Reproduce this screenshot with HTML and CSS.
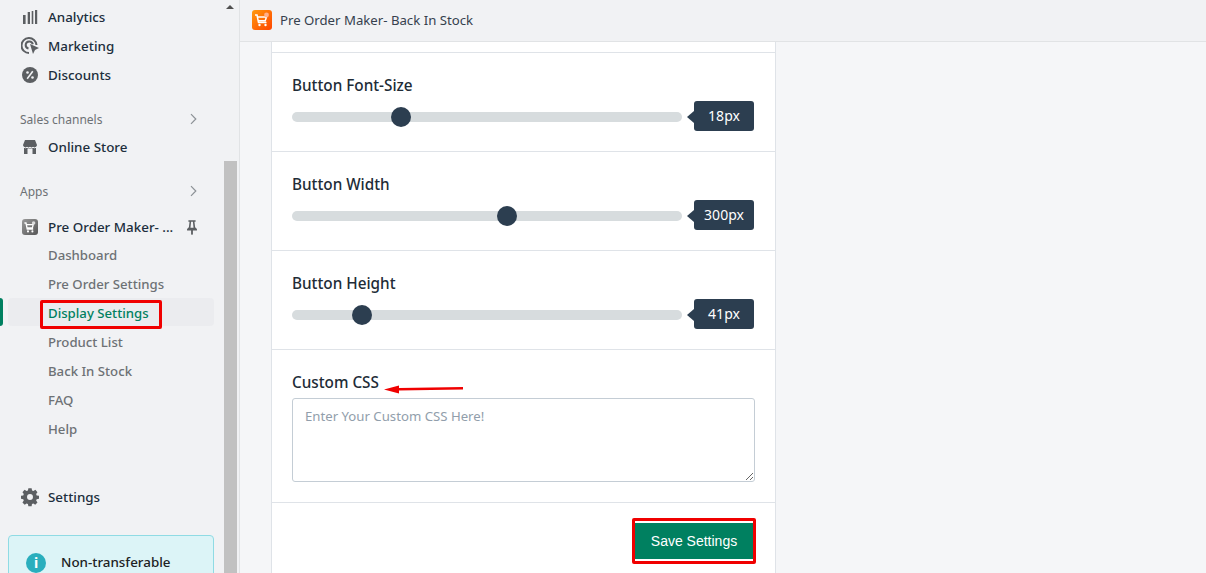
FILE: index.html
```html
<!DOCTYPE html>
<html lang="en">
<head>
  <meta charset="UTF-8">
  <title>Pre Order Maker - Display Settings</title>
  <link rel="stylesheet" href="styles.css">
</head>
<body>
  <div class="layout">
    <aside class="sidebar">
      <nav class="nav">
        <a class="nav-item">
          <svg class="nav-icon" viewBox="0 0 20 20"><path d="M2 8h2.600v9H2zM6.700 5H9v12H6.700zM10.700 4H12.300v13H10.700zM14 3h2.200v14H14z" fill="#5c5f62"/></svg>
          Analytics
        </a>
        <a class="nav-item">
          <svg class="nav-icon" viewBox="0 0 20 20"><path d="M8 17A7.500 7.500 0 1 1 15.500 9M7.500 12.500A3.600 3.600 0 1 1 11.800 8.200" fill="none" stroke="#5c5f62" stroke-width="2"/><path d="M9 8l9 4-4 2-2 4z" fill="#5c5f62"/></svg>
          Marketing
        </a>
        <a class="nav-item">
          <svg class="nav-icon" viewBox="0 0 20 20"><circle cx="9" cy="10" r="8" fill="#5c5f62"/><path d="M11.800 6.200l-5.600 7.600" stroke="#f1f2f4" stroke-width="1.600"/><circle cx="6.500" cy="7.500" r="1.300" fill="#f1f2f4"/><circle cx="11.500" cy="12.500" r="1.300" fill="#f1f2f4"/></svg>
          Discounts
        </a>

        <div class="nav-heading heading-sales">
          Sales channels
          <svg class="chevron" viewBox="0 0 20 20"><path d="M7.500 4l6 6-6 6" fill="none" stroke="#8c9196" stroke-width="1.500"/></svg>
        </div>
        <a class="nav-item">
          <svg class="nav-icon" viewBox="0 0 20 20"><path d="M4 3h10l2 5a2.500 2.500 0 0 1-1 1.800V17h-3.500v-5.500h-5V17H3V9.800A2.500 2.500 0 0 1 2 8z" fill="#5c5f62"/><path d="M3 10.300q1.500 1 3 0 1.500 1 3 0 1.500 1 3 0 1.500 1 3 0" fill="none" stroke="#f1f2f4" stroke-width="1"/></svg>
          Online Store
        </a>

        <div class="nav-heading heading-apps">
          Apps
          <svg class="chevron" viewBox="0 0 20 20"><path d="M7.500 4l6 6-6 6" fill="none" stroke="#8c9196" stroke-width="1.500"/></svg>
        </div>
        <a class="nav-item app-item">
          <span class="app-icon">
            <svg viewBox="0 0 20 20"><path d="M3 5h2l1.500 7.500h7.500M6 7h8l-1 4H6.500" fill="none" stroke="#fff" stroke-width="1.600"/><circle cx="7.500" cy="15.500" r="1.300" fill="#fff"/><circle cx="13" cy="15.500" r="1.300" fill="#fff"/><circle cx="14.500" cy="5" r="2.200" fill="#ddd"/></svg>
          </span>
          <span class="app-name">Pre Order Maker- ...</span>
          <svg class="pin" viewBox="0 0 20 20"><path d="M6 2.500h8v1.800h-1.300l.8 6 2 2v1.700h-4.500v4l-1 1-1-1v-4H4.500v-1.700l2-2 .8-6H6zM9 4.300l-.7 6.500h3.400L11 4.300z" fill="#5c5f62"/></svg>
        </a>
        <a class="nav-sub">Dashboard</a>
        <a class="nav-sub">Pre Order Settings</a>
        <a class="nav-sub active">Display Settings<span class="mark-box"></span></a>
        <a class="nav-sub">Product List</a>
        <a class="nav-sub">Back In Stock</a>
        <a class="nav-sub">FAQ</a>
        <a class="nav-sub">Help</a>

        <a class="nav-item settings-item">
          <svg class="nav-icon" viewBox="0 0 20 20"><path fill-rule="evenodd" d="M8.200 1h3.600l.5 2.500 1.500.7 2.200-1.400 2.300 2.600-1.500 2 .6 1.600 2.600.5v3.300l-2.600.5-.6 1.500 1.500 2.200-2.500 2.500-2.100-1.500-1.500.6-.4 2.500H8.200l-.5-2.500-1.500-.6-2.100 1.500-2.500-2.500 1.500-2.200-.6-1.500L0 12.800V9.500l2.500-.5.600-1.600-1.500-2L4 2.800l2.200 1.400 1.500-.7zM10 7.500a3.300 3.300 0 1 0 0 6.600 3.300 3.300 0 0 0 0-6.600z" transform="translate(0 .3) scale(.9)" fill="#5c5f62"/></svg>
          Settings
        </a>
        <div class="notice">
          <span class="notice-icon">i</span>
          Non-transferable
        </div>
      </nav>
      <div class="scrollbar">
        <span class="scroll-arrow"></span>
        <div class="scroll-thumb"></div>
      </div>
    </aside>

    <div class="content">
      <header class="topbar">
        <span class="app-logo">
          <svg viewBox="0 0 20 20"><path d="M3 5h2l1.500 7.500h8M6 7h8.500l-1.300 3.800H6.500" fill="none" stroke="#fff" stroke-width="1.500"/><circle cx="7.500" cy="15" r="1.200" fill="#fff"/><circle cx="13.500" cy="15" r="1.200" fill="#fff"/><circle cx="14.500" cy="5" r="2.400" fill="#ffb08a"/></svg>
        </span>
        Pre Order Maker- Back In Stock
      </header>
      <main class="main">
        <section class="card">
          <div class="card-row row-top"></div>

          <div class="card-row slider-row">
            <label class="field-label">Button Font-Size</label>
            <div class="slider">
              <div class="track"><span class="thumb" style="left: 27.9%"></span></div>
              <span class="bubble">18px</span>
            </div>
          </div>

          <div class="card-row slider-row">
            <label class="field-label">Button Width</label>
            <div class="slider">
              <div class="track"><span class="thumb" style="left: 55.1%"></span></div>
              <span class="bubble">300px</span>
            </div>
          </div>

          <div class="card-row slider-row">
            <label class="field-label">Button Height</label>
            <div class="slider">
              <div class="track"><span class="thumb" style="left: 17.9%"></span></div>
              <span class="bubble">41px</span>
            </div>
          </div>

          <div class="card-row css-row">
            <label class="field-label css-label">Custom CSS
              <svg class="arrow-mark" viewBox="0 0 80 9"><path d="M0 4.500L15 0.500v2.500L79 2V4.500L15 5.500v3z" fill="#f00000"/></svg>
            </label>
            <textarea class="css-input" placeholder="Enter Your Custom CSS Here!"></textarea>
          </div>

          <div class="card-row actions">
            <button class="save-btn">Save Settings</button>
          </div>
        </section>
      </main>
    </div>
  </div>
</body>
</html>
```

FILE: styles.css
```css
* {
  box-sizing: border-box;
}
html, body {
  height: 100%;
}
body {
  margin: 0;
  overflow: hidden;
  font-family: 'Noto Sans', 'Open Sans', sans-serif;
  font-size: 14px;
  color: #202223;
  background: #f5f6f8;
}
.layout {
  display: flex;
  height: 100vh;
}

/* sidebar */
.sidebar {
  width: 240px;
  flex-shrink: 0;
  display: flex;
  background: #f1f2f4;
  border-right: 1px solid #e1e3e5;
  overflow: hidden;
}
.nav {
  width: 224px;
  flex-shrink: 0;
  padding: 2px 10px 0 8px;
}
.nav-item {
  display: flex;
  align-items: center;
  gap: 7px;
  height: 29px;
  padding-left: 13px;
  font-size: 13.4px;
  font-weight: 500;
  color: #202e3c;
}
.nav-icon {
  width: 20px;
  height: 20px;
  flex-shrink: 0;
}
.nav-heading {
  display: flex;
  align-items: center;
  justify-content: space-between;
  height: 20px;
  padding: 0 13px 0 12px;
  font-size: 12px;
  color: #6d7175;
}
.heading-sales {
  margin-top: 20px;
  margin-bottom: 3px;
}
.heading-apps {
  margin-top: 20px;
  margin-bottom: 11px;
}
.chevron {
  width: 16px;
  height: 16px;
}
.app-item {
  height: 28px;
  padding-top: 1px;
}
.app-icon {
  width: 16px;
  height: 16px;
  margin: 0 3px 0 1px;
  border-radius: 3px;
  background: linear-gradient(135deg, #9a9a9a, #555);
  flex-shrink: 0;
}
.app-icon svg, .app-logo svg {
  display: block;
  width: 100%;
  height: 100%;
}
.app-name {
  flex: 1;
  white-space: nowrap;
}
.pin {
  width: 18px;
  height: 18px;
  margin-right: 13px;
}
.nav-sub {
  position: relative;
  display: flex;
  align-items: center;
  height: 29px;
  padding-left: 40px;
  font-size: 13.2px;
  font-weight: 500;
  color: #6d7175;
}
.nav-sub.active {
  background: #ebecef;
  border-radius: 4px;
  font-weight: 500;
  color: #008060;
  height: 28px;
  padding-top: 1px;
  margin-bottom: 1px;
}
.nav-sub.active::before {
  content: "";
  position: absolute;
  left: -8px;
  top: 0;
  width: 3px;
  height: 100%;
  background: #008060;
  border-radius: 0 3px 3px 0;
}
.mark-box {
  position: absolute;
  left: 32px;
  top: 2px;
  width: 122px;
  height: 29px;
  border: 3px solid #f00000;
  border-radius: 2px;
}
.settings-item {
  margin-top: 39px;
}
.notice {
  display: flex;
  align-items: flex-start;
  gap: 15px;
  height: 60px;
  margin-top: 24px;
  padding: 17px 0 0 17px;
  background: #dcf4f7;
  border: 1px solid #8fdbe4;
  border-radius: 4px;
  font-size: 13.4px;
  font-weight: 500;
  white-space: nowrap;
}
.notice-icon {
  width: 20px;
  height: 20px;
  flex-shrink: 0;
  border-radius: 50%;
  background: #2aaebd;
  color: #fff;
  font-size: 14px;
  font-weight: 700;
  line-height: 20px;
  text-align: center;
}
.scrollbar {
  position: relative;
  width: 13px;
  background: #f1f2f4;
  padding-top: 161px;
}
.scroll-arrow {
  position: absolute;
  left: 2px;
  top: 5px;
  border-left: 4px solid transparent;
  border-right: 4px solid transparent;
  border-bottom: 4px solid #505050;
}
.scroll-thumb {
  height: 100%;
  background: #c1c1c1;
}

/* main */
.content {
  flex: 1;
  min-width: 0;
  display: flex;
  flex-direction: column;
}
.topbar {
  display: flex;
  align-items: center;
  gap: 8px;
  height: 42px;
  flex-shrink: 0;
  padding: 0 0 1px 12px;
  background: #f1f2f4;
  border-bottom: 1px solid #e1e3e5;
  font-size: 13.2px;
  color: #36414e;
}
.app-logo {
  width: 20px;
  height: 20px;
  border-radius: 3px;
  background: linear-gradient(135deg, #ff9a0d, #ff4500);
}
.main {
  flex: 1;
  padding-left: 31px;
  overflow: hidden;
}
.card {
  width: 505px;
  background: #fff;
  border-left: 1px solid #dfe3e8;
  border-right: 1px solid #dfe3e8;
}
.card-row {
  padding: 0 20px;
  border-bottom: 1px solid #dfe3e8;
}
.row-top {
  height: 11px;
}
.slider-row {
  height: 99px;
  padding-top: 21px;
}
.field-label {
  display: block;
  font-size: 15.3px;
  font-weight: 500;
  line-height: 22px;
  color: #212b36;
}
.slider {
  display: flex;
  align-items: flex-start;
  gap: 12px;
  margin-top: 5px;
}
.track {
  position: relative;
  width: 390px;
  height: 10px;
  margin-top: 11px;
  border-radius: 5px;
  background: #d7dcde;
}
.thumb {
  position: absolute;
  top: -5px;
  width: 20px;
  height: 20px;
  margin-left: -10px;
  border-radius: 50%;
  background: #2c3e50;
}
.bubble {
  position: relative;
  width: 60px;
  height: 30px;
  border-radius: 3px;
  background: #2c3e50;
  color: #fff;
  font-size: 14px;
  line-height: 30px;
  text-align: center;
}
.bubble::before {
  content: "";
  position: absolute;
  left: -7px;
  top: 10px;
  border-top: 6px solid transparent;
  border-bottom: 6px solid transparent;
  border-right: 7px solid #2c3e50;
}
.css-row {
  height: 153px;
  padding-top: 21px;
}
.css-label {
  position: relative;
}
.arrow-mark {
  position: absolute;
  left: 92px;
  top: 14px;
  width: 80px;
  height: 9px;
}
.css-input {
  display: block;
  width: 463px;
  height: 84px;
  margin-top: 5px;
  padding: 8px 12px;
  border: 1px solid #c4cdd5;
  border-radius: 3px;
  font-family: inherit;
  font-size: 13.2px;
  color: #212b36;
}
.css-input::placeholder {
  color: #919eab;
}
.actions {
  display: flex;
  justify-content: flex-end;
  height: 80px;
  padding-top: 15px;
  border-bottom: 0;
}
.save-btn {
  width: 124px;
  height: 46px;
  margin-right: -1px;
  padding: 0;
  background: #008060;
  border: 3px solid #f00000;
  border-radius: 2px;
  box-shadow: inset 0 2px 0 #fff, inset 0 -2px 0 #fff;
  color: #fff;
  font-family: 'Liberation Sans', Arial, sans-serif;
  font-size: 14px;
  cursor: pointer;
}
```
